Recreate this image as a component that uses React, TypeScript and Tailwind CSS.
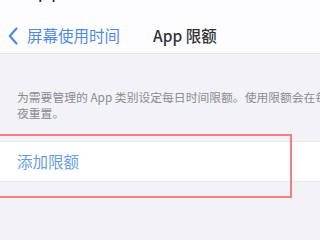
import React from "react";

const ChevronLeft: React.FC = () => (
  <svg width="10" height="18" viewBox="0 0 10 18" fill="none" className="shrink-0">
    <path
      d="M8.5 1.5 L1.8 9 L8.5 16.5"
      stroke="#4d8ae5"
      strokeWidth="2.2"
      strokeLinecap="round"
      strokeLinejoin="round"
    />
  </svg>
);

const App: React.FC = () => {
  return (
    <div className="relative w-[320px] h-[240px] overflow-hidden bg-[#f2f2f7] font-['Noto_Sans_CJK_SC',sans-serif]">
      {/* header */}
      <div className="bg-[#fdfdff] border-b border-[#e4e4e9]">
        <div className="h-[18px] overflow-hidden">
          <div className="flex justify-between px-[34px] pr-[4px] -mt-[13px] text-[13px] leading-[16px] font-semibold text-[#222]">
            <span>下午3:28</span>
            <span>100%</span>
          </div>
        </div>
        <div className="h-[35px] flex items-center pl-[8px]">
          <ChevronLeft />
          <span className="ml-[9px] text-[15.5px] text-[#4d8ae5]">屏幕使用时间</span>
          <span className="ml-[33px] text-[15.5px] font-medium text-[#333336]">App 限额</span>
        </div>
      </div>

      {/* footnote */}
      <div className="pt-[35px] pl-[17px] text-[11.8px] leading-[16px] text-[#8c8c91] whitespace-nowrap">
        为需要管理的 App 类别设定每日时间限额。使用限额会在每天午
        <br />
        夜重置。
      </div>

      {/* cell */}
      <div className="mt-[20px] h-[41px] bg-white border-y border-[#e8e8ed] flex items-center pl-[17px]">
        <span className="text-[15.5px] text-[#6a9ce6]">添加限额</span>
      </div>

      {/* annotation */}
      <div className="absolute left-[-4px] top-[134px] w-[296px] h-[64px] border-2 border-[#f47f7f]" />
    </div>
  );
};

export default App;
